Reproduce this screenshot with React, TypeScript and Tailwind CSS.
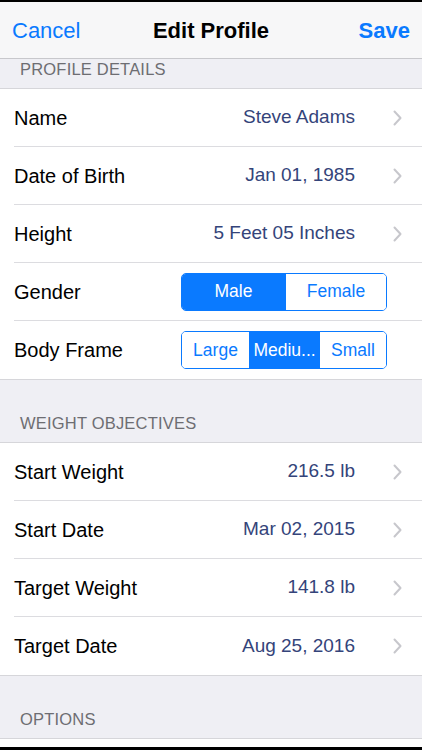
import React from 'react';

const font = { fontFamily: "'Liberation Sans', Arial, sans-serif" };

function Chevron() {
  return (
    <svg width="9" height="16" viewBox="0 0 9 16" fill="none" className="shrink-0">
      <path d="M1.5 1.5 L7.5 8 L1.5 14.5" stroke="#c7c7cc" strokeWidth="2" strokeLinecap="round" strokeLinejoin="round" />
    </svg>
  );
}

function Row({ label, value, last }: { label: string; value: string; last?: boolean }) {
  return (
    <div className="pl-[14px]">
      <div className={`h-[58px] flex items-center pr-[20px] ${last ? '' : 'border-b border-[#dcdce0]'}`}>
        <span className="text-[20px] text-black flex-1">{label}</span>
        <span className="text-[19px] text-[#34447a] mr-[38px]">{value}</span>
        <Chevron />
      </div>
    </div>
  );
}

function SectionHeader({ title, tall }: { title: string; tall?: boolean }) {
  return (
    <div className={`bg-[#efeff4] border-b border-[#d6d6da] flex items-end px-[20px] pb-[6px] ${tall ? 'h-[63px]' : 'h-[30px]'}`}>
      <span className="text-[16.5px] text-[#6d6d72] tracking-[0.2px]">{title}</span>
    </div>
  );
}

export default function App() {
  return (
    <div className="w-[422px] h-[750px] bg-black overflow-hidden flex flex-col" style={font}>
      <div className="mt-[2px] bg-white flex-1 flex flex-col">
        <div className="h-[57px] bg-[#f7f7f8] border-b border-[#c8c8cc] grid grid-cols-[1fr_auto_1fr] items-center px-[12px]">
          <span className="text-[22px] text-[#0a7aff]">Cancel</span>
          <span className="text-[22px] font-bold text-black">Edit Profile</span>
          <span className="text-[22px] font-bold text-[#0a7aff] text-right">Save</span>
        </div>
        <SectionHeader title="PROFILE DETAILS" />
        <Row label="Name" value="Steve Adams" />
        <Row label="Date of Birth" value="Jan 01, 1985" />
        <Row label="Height" value="5 Feet 05 Inches" />
        <div className="pl-[14px]">
          <div className="h-[58px] flex items-center border-b border-[#dcdce0]">
            <span className="text-[20px] text-black flex-1">Gender</span>
            <div className="flex h-[38px] w-[206px] mr-[35px] border border-[#0a7aff] rounded-[5px] overflow-hidden">
              <div className="w-[103px] flex items-center justify-center text-[17.5px] bg-[#0a7aff] text-white">Male</div>
              <div className="flex-1 flex items-center justify-center text-[17.5px] bg-white text-[#0a7aff] border-l border-[#0a7aff]">Female</div>
            </div>
          </div>
        </div>
        <div className="pl-[14px]">
          <div className="h-[58px] flex items-center">
            <span className="text-[20px] text-black flex-1">Body Frame</span>
            <div className="flex h-[38px] w-[206px] mr-[35px] border border-[#0a7aff] rounded-[5px] overflow-hidden">
              <div className="w-[67px] flex items-center justify-center text-[17.5px] bg-white text-[#0a7aff]">Large</div>
              <div className="w-[71px] flex items-center justify-center text-[17.5px] bg-[#0a7aff] text-white">Mediu...</div>
              <div className="flex-1 flex items-center justify-center text-[17.5px] bg-white text-[#0a7aff]">Small</div>
            </div>
          </div>
        </div>
        <div className="border-t border-[#d6d6da]" />
        <SectionHeader title="WEIGHT OBJECTIVES" tall />
        <Row label="Start Weight" value="216.5 lb" />
        <Row label="Start Date" value="Mar 02, 2015" />
        <Row label="Target Weight" value="141.8 lb" />
        <Row label="Target Date" value="Aug 25, 2016" last />
        <div className="border-t border-[#d6d6da]" />
        <SectionHeader title="OPTIONS" tall />
        <div className="flex-1 bg-white" />
        <div className="h-[3px] bg-black" />
      </div>
    </div>
  );
}
